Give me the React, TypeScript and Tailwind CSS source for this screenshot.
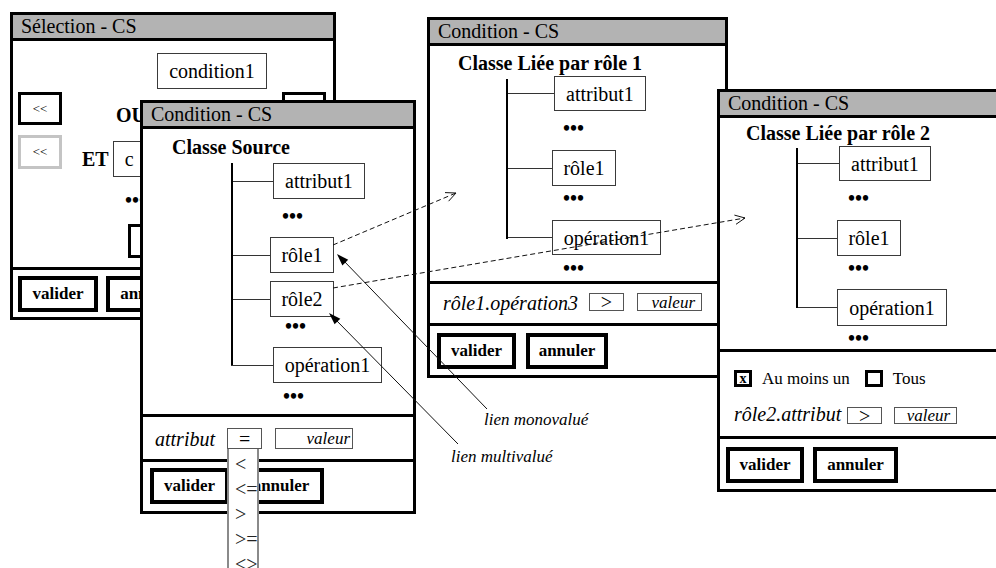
import React from "react";

const NB =
  "flex items-center justify-center border border-[#3a3a3a] bg-white text-[20px] leading-none whitespace-nowrap";

function Title({ children }: { children: React.ReactNode }) {
  return (
    <div className="h-[26px] shrink-0 whitespace-nowrap border-b-[3px] border-black bg-[#b3b3b3] pl-2 text-[20px] leading-[23px]">
      {children}
    </div>
  );
}

function Btn({ children, className = "" }: { children: React.ReactNode; className?: string }) {
  return (
    <div
      className={
        "flex h-[36px] shrink-0 items-center justify-center border-[4px] border-black bg-white text-[17px] font-bold " +
        className
      }
    >
      {children}
    </div>
  );
}

function Dots({ className }: { className: string }) {
  return (
    <div className={"shrink-0 " + className}>
      <div className="h-[6px] whitespace-nowrap text-[20px] font-bold leading-[6px]">•••</div>
    </div>
  );
}

function Branch({ row, line, box, label }: { row: string; line: string; box: string; label: string }) {
  return (
    <div className={"flex shrink-0 items-center " + row}>
      <div className={"h-px shrink-0 bg-[#333] " + line} />
      <div className={NB + " h-full shrink-0 " + box}>{label}</div>
    </div>
  );
}

export default function App() {
  return (
    <div className="relative h-[568px] w-[996px] overflow-hidden bg-white font-[family-name:'Liberation_Serif',serif] text-black">
      {/* Window 1 : Sélection */}
      <div className="absolute left-[10px] top-[12px] z-[1] flex h-[308px] w-[326px] flex-col border-[3px] border-black bg-white">
        <Title>Sélection - CS</Title>
        <div className="flex h-[226px] shrink-0 flex-col overflow-hidden">
          <div className={NB + " ml-[144px] mt-[12px] h-[36px] w-[110px] shrink-0"}>condition1</div>
          <div className="mt-[3px] flex h-[33px] shrink-0 items-start">
            <div className="ml-[5px] flex h-[33px] w-[44px] shrink-0 items-center justify-center border-[3px] border-black text-[13px]">
              &lt;&lt;
            </div>
            <div className="ml-[54px] mt-[12px] shrink-0 text-[20px] font-bold leading-[23px]">OU</div>
            <div className="ml-[136px] h-[33px] w-[44px] shrink-0 border-[3px] border-black" />
          </div>
          <div className="mt-[10px] flex shrink-0 items-start">
            <div className="ml-[5px] flex h-[34px] w-[44px] shrink-0 items-center justify-center border-[3px] border-[#c4c4c4] text-[13px]">
              &lt;&lt;
            </div>
            <div className="ml-[20px] mt-[13px] shrink-0 text-[20px] font-bold leading-[23px]">ET</div>
            <div className="ml-[4px] mt-[6px] flex h-[36px] w-[120px] shrink-0 items-center border border-[#3a3a3a] pl-[11px] text-[20px]">
              c
            </div>
          </div>
          <Dots className="mt-[20px] pl-[112px]" />
          <div className="ml-[115px] mt-[21px] h-[34px] w-[80px] shrink-0 border-[3px] border-black" />
        </div>
        <div className="flex h-[50px] shrink-0 gap-[8px] border-t-[3px] border-black pl-[5px] pt-[6px]">
          <Btn className="w-[80px]">valider</Btn>
          <Btn className="w-[85px]">annuler</Btn>
        </div>
      </div>

      {/* Window 2 : Classe Source */}
      <div className="absolute left-[140px] top-[100px] z-[2] flex h-[414px] w-[276px] flex-col border-[3px] border-black bg-white">
        <Title>Condition - CS</Title>
        <div className="flex h-[285px] shrink-0 flex-col">
          <div className="whitespace-nowrap pl-[29px] pt-[7px] text-[20px] font-bold leading-[23px]">Classe Source</div>
          <div className="relative ml-[88px] mt-[4px] flex flex-col">
            <div className="absolute left-0 top-0 h-[202px] w-[2px] bg-black" />
            <Branch row="h-[36px]" line="w-[42px]" box="w-[92px]" label="attribut1" />
            <Dots className="h-[38px] pl-[51px] pt-[14px]" />
            <Branch row="h-[36px]" line="w-[39px]" box="w-[64px]" label="rôle1" />
            <div className="h-[8px] shrink-0" />
            <Branch row="h-[36px]" line="w-[39px]" box="w-[64px]" label="rôle2" />
            <Dots className="h-[30px] pl-[54px] pt-[6px]" />
            <Branch row="h-[36px]" line="w-[42px]" box="w-[109px]" label="opération1" />
            <Dots className="pl-[52px] pt-[10px]" />
          </div>
        </div>
        <div className="flex h-[45px] shrink-0 items-start border-t-[3px] border-black pl-[12px] pt-[11px]">
          <span className="text-[20px] italic leading-[23px]">attribut</span>
          <div className="relative ml-[12px] shrink-0">
            <div className="flex h-[21px] w-[35px] items-center justify-center border border-[#555] text-[20px] leading-none">
              =
            </div>
            <div className="absolute left-0 top-full z-10 flex h-[125px] w-[32px] flex-col border-2 border-t-0 border-[#8a8a8a] bg-white pl-[6px] pt-[3px] text-[20px] leading-[25px] text-[#222]">
              <span className="whitespace-nowrap">&lt;</span>
              <span className="whitespace-nowrap">&lt;=</span>
              <span className="whitespace-nowrap">&gt;</span>
              <span className="whitespace-nowrap">&gt;=</span>
              <span className="whitespace-nowrap">&lt;&gt;</span>
            </div>
          </div>
          <div className="ml-[13px] flex h-[21px] w-[78px] shrink-0 items-center justify-end border border-[#555] pr-[2px] text-[17px] italic leading-none">
            valeur
          </div>
        </div>
        <div className="flex h-[52px] shrink-0 gap-[9px] border-t-[3px] border-black pl-[7px] pt-[6px]">
          <Btn className="w-[79px]">valider</Btn>
          <Btn className="w-[86px]">annuler</Btn>
        </div>
      </div>

      {/* Window 3 : Classe Liée par rôle 1 */}
      <div className="absolute left-[427px] top-[17px] z-[3] flex h-[361px] w-[301px] flex-col border-[3px] border-black bg-white">
        <Title>Condition - CS</Title>
        <div className="flex h-[235px] shrink-0 flex-col">
          <div className="whitespace-nowrap pl-[28px] pt-[6px] text-[20px] font-bold leading-[23px]">
            Classe Liée par rôle 1
          </div>
          <div className="relative ml-[76px] mt-[4px] flex flex-col">
            <div className="absolute left-0 top-0 h-[160px] w-[2px] bg-black" />
            <Branch row="-mt-[3px] h-[35px]" line="w-[48px]" box="w-[92px]" label="attribut1" />
            <Dots className="h-[39px] pl-[57px] pt-[14px]" />
            <Branch row="h-[36px]" line="w-[46px]" box="w-[64px]" label="rôle1" />
            <Dots className="h-[34px] pl-[57px] pt-[9px]" />
            <Branch row="h-[35px]" line="w-[46px]" box="w-[109px]" label="opération1" />
            <Dots className="pl-[57px] pt-[10px]" />
          </div>
        </div>
        <div className="flex h-[42px] shrink-0 items-start border-t-[3px] border-black pl-[13px] pt-[8px]">
          <span className="whitespace-nowrap text-[20px] italic leading-[23px]">rôle1.opération3</span>
          <div className="ml-[11px] mt-[1px] flex h-[18px] w-[35px] shrink-0 items-center justify-center border border-[#555] text-[20px] leading-none">
            &gt;
          </div>
          <div className="ml-[13px] mt-[1px] flex h-[18px] w-[65px] shrink-0 items-center justify-end border border-[#555] pr-[6px] text-[17px] italic leading-none">
            valeur
          </div>
        </div>
        <div className="flex h-[52px] shrink-0 gap-[10px] border-t-[3px] border-black pl-[7px] pt-[7px]">
          <Btn className="w-[79px]">valider</Btn>
          <Btn className="w-[82px]">annuler</Btn>
        </div>
      </div>

      {/* Window 4 : Classe Liée par rôle 2 */}
      <div className="absolute left-[717px] top-[89px] z-[4] flex h-[403px] w-[293px] flex-col border-[3px] border-black bg-white">
        <Title>Condition - CS</Title>
        <div className="flex h-[231px] shrink-0 flex-col">
          <div className="whitespace-nowrap pl-[26px] pt-[4px] text-[20px] font-bold leading-[23px]">
            Classe Liée par rôle 2
          </div>
          <div className="relative ml-[76px] mt-[3px] flex flex-col">
            <div className="absolute left-0 top-0 h-[160px] w-[2px] bg-black" />
            <Branch row="-mt-[2px] h-[35px]" line="w-[43px]" box="w-[92px]" label="attribut1" />
            <Dots className="h-[39px] pl-[52px] pt-[14px]" />
            <Branch row="h-[36px]" line="w-[41px]" box="w-[64px]" label="rôle1" />
            <Dots className="h-[33px] pl-[52px] pt-[9px]" />
            <Branch row="h-[37px]" line="w-[41px]" box="w-[110px]" label="opération1" />
            <Dots className="pl-[52px] pt-[9px]" />
          </div>
        </div>
        <div className="flex h-[87px] shrink-0 flex-col border-t-[3px] border-black pl-[14px] pt-[17px]">
          <div className="flex items-start">
            <div className="mt-[1px] flex h-[17px] w-[18px] shrink-0 items-center justify-center border-[3px] border-black text-[14px] font-bold leading-none">
              x
            </div>
            <span className="ml-[10px] whitespace-nowrap text-[17px] leading-[20px]">Au moins un</span>
            <div className="ml-[15px] mt-[1px] h-[17px] w-[18px] shrink-0 border-[3px] border-black" />
            <span className="ml-[10px] text-[17px] leading-[20px]">Tous</span>
          </div>
          <div className="mt-[14px] flex items-start">
            <span className="whitespace-nowrap text-[20px] italic leading-[23px]">rôle2.attribut</span>
            <div className="ml-[6px] mt-[4px] flex h-[17px] w-[35px] shrink-0 items-center justify-center border border-[#555] text-[20px] leading-none">
              &gt;
            </div>
            <div className="ml-[12px] mt-[4px] flex h-[17px] w-[63px] shrink-0 items-center justify-end border border-[#555] pr-[6px] text-[17px] italic leading-none">
              valeur
            </div>
          </div>
        </div>
        <div className="flex h-[53px] shrink-0 gap-[9px] border-t-[3px] border-black pl-[6px] pt-[8px]">
          <Btn className="w-[78px]">valider</Btn>
          <Btn className="w-[85px]">annuler</Btn>
        </div>
      </div>

      {/* links overlay */}
      <svg className="pointer-events-none absolute left-0 top-0 z-[5]" width="996" height="568">
        <g stroke="#111" strokeWidth="1" fill="none">
          <line x1="333" y1="245" x2="456" y2="193" strokeDasharray="5 3" />
          <polyline points="445,192.6 456,193 448.6,201.2" />
          <line x1="333" y1="288" x2="745" y2="218" strokeDasharray="5 3" />
          <polyline points="734.4,215.1 745,218 736,224.3" />
          <line x1="487" y1="409" x2="343" y2="260" />
          <line x1="458" y1="444" x2="335" y2="319" />
        </g>
        <polygon fill="#000" points="337,254 342.4,265.4 348.2,259.8" />
        <polygon fill="#000" points="329,313 334.6,324.3 340.3,318.7" />
      </svg>
      <span className="absolute left-[484px] top-[410px] z-[5] whitespace-nowrap text-[17px] italic leading-[20px]">
        lien monovalué
      </span>
      <span className="absolute left-[451px] top-[447px] z-[5] whitespace-nowrap text-[17px] italic leading-[20px]">
        lien multivalué
      </span>
    </div>
  );
}
